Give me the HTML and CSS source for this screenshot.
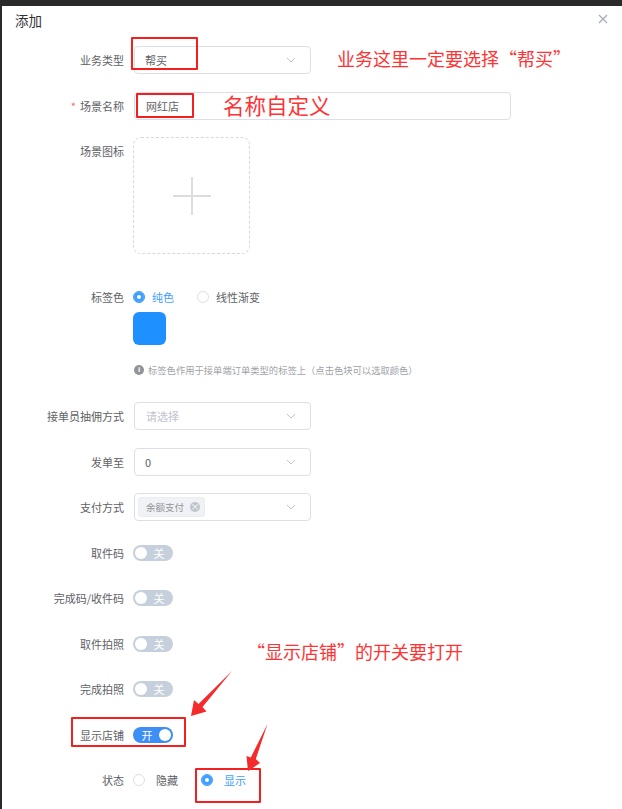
FILE: index.html
```html
<!DOCTYPE html>
<html lang="zh-CN">
<head>
    <meta charset="UTF-8">
    <meta name="viewport" content="width=device-width, initial-scale=1.0">
    <title>添加</title>
    <link rel="stylesheet" href="styles.css">
</head>
<body>
    <div class="page">
        <div class="dialog">
            <div class="dialog-header">
                <span class="dialog-title">添加</span>
                <span class="dialog-close">
                    <svg width="10" height="10" viewBox="0 0 10 10"><path d="M1 1L9 9M9 1L1 9" stroke="#a3aab8" stroke-width="1.2" fill="none"/></svg>
                </span>
            </div>
            <form class="form">
                <div class="form-item">
                    <label class="form-label">业务类型</label>
                    <div class="select">
                        <span class="select-value">帮买</span>
                        <svg class="chevron" width="10" height="6" viewBox="0 0 10 6"><polyline points="1,1 5,5 9,1" stroke="#c0c4cc" fill="none"/></svg>
                    </div>
                </div>
                <div class="form-item">
                    <label class="form-label"><span class="required">*</span>场景名称</label>
                    <div class="input input-wide">网红店</div>
                </div>
                <div class="form-item form-item-upload">
                    <label class="form-label">场景图标</label>
                    <div class="upload">
                        <svg width="40" height="40" viewBox="0 0 40 40"><rect x="19" y="1" width="2" height="38" fill="#dcdcdc"/><rect x="1" y="19" width="38" height="2" fill="#dcdcdc"/></svg>
                    </div>
                </div>
                <div class="form-item form-item-color">
                    <label class="form-label">标签色</label>
                    <div class="form-control">
                        <div class="radio-group">
                            <span class="radio radio-checked"><span class="radio-dot"></span><span class="radio-text">纯色</span></span>
                            <span class="radio"><span class="radio-dot"></span><span class="radio-text">线性渐变</span></span>
                        </div>
                        <div class="color-block"></div>
                        <div class="hint"><span class="hint-icon">i</span>标签色作用于接单端订单类型的标签上（点击色块可以选取颜色）</div>
                    </div>
                </div>
                <div class="form-item">
                    <label class="form-label">接单员抽佣方式</label>
                    <div class="select">
                        <span class="select-placeholder">请选择</span>
                        <svg class="chevron" width="10" height="6" viewBox="0 0 10 6"><polyline points="1,1 5,5 9,1" stroke="#c0c4cc" fill="none"/></svg>
                    </div>
                </div>
                <div class="form-item">
                    <label class="form-label">发单至</label>
                    <div class="select">
                        <span class="select-value">0</span>
                        <svg class="chevron" width="10" height="6" viewBox="0 0 10 6"><polyline points="1,1 5,5 9,1" stroke="#c0c4cc" fill="none"/></svg>
                    </div>
                </div>
                <div class="form-item">
                    <label class="form-label">支付方式</label>
                    <div class="select select-tags">
                        <span class="tag">余额支付<span class="tag-close">×</span></span>
                        <svg class="chevron" width="10" height="6" viewBox="0 0 10 6"><polyline points="1,1 5,5 9,1" stroke="#c0c4cc" fill="none"/></svg>
                    </div>
                </div>
                <div class="form-item">
                    <label class="form-label">取件码</label>
                    <span class="switch"><span class="switch-knob"></span><span class="switch-text">关</span></span>
                </div>
                <div class="form-item">
                    <label class="form-label">完成码/收件码</label>
                    <span class="switch"><span class="switch-knob"></span><span class="switch-text">关</span></span>
                </div>
                <div class="form-item">
                    <label class="form-label">取件拍照</label>
                    <span class="switch"><span class="switch-knob"></span><span class="switch-text">关</span></span>
                </div>
                <div class="form-item">
                    <label class="form-label">完成拍照</label>
                    <span class="switch"><span class="switch-knob"></span><span class="switch-text">关</span></span>
                </div>
                <div class="form-item">
                    <label class="form-label">显示店铺</label>
                    <span class="switch switch-on"><span class="switch-text">开</span><span class="switch-knob"></span></span>
                </div>
                <div class="form-item">
                    <label class="form-label">状态</label>
                    <div class="radio-group radio-group-wide">
                        <span class="radio"><span class="radio-dot"></span><span class="radio-text">隐藏</span></span>
                        <span class="radio radio-checked"><span class="radio-dot"></span><span class="radio-text">显示</span></span>
                    </div>
                </div>
            </form>
        </div>

        <!-- annotations drawn over the screenshot -->
        <div class="mark mark-box" style="left:131px;top:37px;width:67px;height:33px"></div>
        <div class="mark mark-box" style="left:136px;top:93px;width:58px;height:25px"></div>
        <div class="mark mark-box" style="left:71px;top:717px;width:115px;height:30px"></div>
        <div class="mark mark-box" style="left:195px;top:768px;width:66px;height:35px"></div>
        <div class="mark mark-text" style="left:337px;top:47px">业务这里一定要选择“帮买”</div>
        <div class="mark mark-text mark-text-big" style="left:223px;top:92px">名称自定义</div>
        <div class="mark mark-text" style="left:247px;top:640px">“显示店铺”的开关要打开</div>
        <svg class="mark mark-arrows" width="622" height="809" viewBox="0 0 622 809">
            <polygon points="232,671 202.5,707 206.5,711.5 191,716 194,700 198.5,704" fill="#f52a2a"/>
            <polygon points="267.5,724 255.8,759 260,763 248,771 246.5,756 250.8,757.5" fill="#f52a2a"/>
        </svg>
    </div>
</body>
</html>
```

FILE: styles.css
```css
body {
    margin: 0;
    background-color: #2a2a2a;
    font-family: "Noto Sans CJK SC", "Noto Sans", sans-serif;
}
.page {
    position: relative;
    width: 622px;
    height: 809px;
    overflow: hidden;
}
.dialog {
    margin: 6px 0 0 2px;
    height: 803px;
    background: #ffffff;
}
.dialog-header {
    display: flex;
    justify-content: space-between;
    align-items: center;
    height: 28px;
    padding: 0 14px 0 13px;
}
.dialog-title {
    font-size: 13.5px;
    color: #303133;
}
.dialog-close {
    display: flex;
    margin-top: -2px;
}
.form {
    padding-top: 12px;
}
.form-item {
    display: flex;
    align-items: flex-start;
    margin-bottom: 17.5px;
}
.form-item-upload {
    margin-bottom: 29px;
}
.form-item-color {
    margin-bottom: 24px;
}
.form-label {
    width: 122px;
    padding-right: 10px;
    flex-shrink: 0;
    text-align: right;
    font-size: 11px;
    line-height: 28px;
    color: #606266;
}
.required {
    color: #f56c6c;
    margin-right: 4px;
}
.select, .input {
    display: flex;
    align-items: center;
    box-sizing: border-box;
    width: 177px;
    height: 28px;
    padding: 0 10px;
    border: 1px solid #dcdfe6;
    border-radius: 4px;
    font-size: 11px;
    color: #606266;
}
.input-wide {
    width: 377px;
    padding-left: 11px;
}
.select-value {
    flex: 1;
}
.select-placeholder {
    flex: 1;
    padding-left: 1px;
    color: #c0c4cc;
}
.chevron {
    margin-right: 4px;
}
.select-tags {
    padding-left: 3px;
}
.tag {
    display: flex;
    align-items: center;
    gap: 6px;
    height: 18px;
    padding: 0 4px 0 7px;
    margin-right: auto;
    background: #f0f2f5;
    border: 1px solid #ebedf0;
    border-radius: 3px;
    font-size: 9.5px;
    color: #909399;
}
.tag-close {
    display: flex;
    align-items: center;
    justify-content: center;
    width: 10px;
    height: 10px;
    border-radius: 50%;
    background: #c0c4cc;
    color: #ffffff;
    font-size: 9px;
    line-height: 10px;
}
.upload {
    display: flex;
    align-items: center;
    justify-content: center;
    box-sizing: border-box;
    width: 117px;
    height: 117px;
    margin-left: -1px;
    border: 1px dashed #d9d9d9;
    border-radius: 8px;
}
.radio-group {
    display: flex;
    align-items: center;
    gap: 23px;
    height: 28px;
    margin-left: -1px;
}
.radio {
    display: flex;
    align-items: center;
    gap: 7px;
    font-size: 11px;
    color: #606266;
}
.radio-group-wide .radio {
    gap: 11px;
}
.radio-dot {
    box-sizing: border-box;
    width: 12px;
    height: 12px;
    border: 1px solid #dcdfe6;
    border-radius: 50%;
    background: #ffffff;
}
.radio-checked .radio-dot {
    border-color: #409eff;
    background: #409eff;
    box-shadow: inset 0 0 0 3px #409eff, inset 0 0 0 6px #ffffff;
}
.radio-checked .radio-text {
    color: #409eff;
}
.color-block {
    width: 33px;
    height: 33px;
    margin: 1px 0 0 -1px;
    border-radius: 6px;
    background: #1e90ff;
}
.hint {
    display: flex;
    align-items: center;
    gap: 4px;
    margin-top: 17px;
    font-size: 9.3px;
    line-height: 16px;
    color: #a0a3a8;
}
.hint-icon {
    display: flex;
    align-items: center;
    justify-content: center;
    width: 10px;
    height: 10px;
    border-radius: 50%;
    background: #909399;
    color: #ffffff;
    font-size: 8px;
    font-weight: bold;
    font-family: "Liberation Sans", sans-serif;
}
.switch {
    display: flex;
    align-items: center;
    box-sizing: border-box;
    width: 40px;
    height: 16px;
    margin-top: 6px;
    margin-left: -1px;
    padding: 0 2px;
    border-radius: 8px;
    background: #c6d0dc;
}
.switch-knob {
    width: 12px;
    height: 12px;
    border-radius: 50%;
    background: #ffffff;
}
.switch-text {
    flex: 1;
    text-align: center;
    font-size: 11px;
    line-height: 16px;
    color: #ffffff;
}
.switch-on {
    background: #3d8ff5;
}
.mark {
    position: absolute;
}
.mark-box {
    box-sizing: border-box;
    border: 2px solid #f41f1f;
    border-radius: 1px;
}
.mark-text {
    font-size: 18px;
    line-height: 22px;
    color: #ff3333;
    white-space: nowrap;
}
.mark-text-big {
    font-size: 21.5px;
    line-height: 26px;
}
.mark-arrows {
    left: 0;
    top: 0;
}
```
